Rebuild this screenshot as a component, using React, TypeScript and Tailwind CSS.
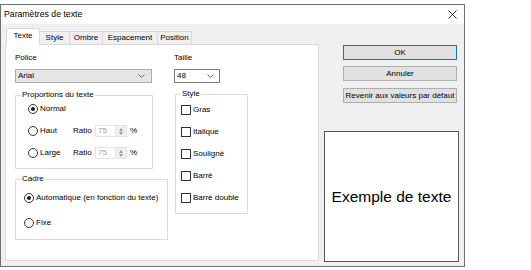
import React from 'react';

const Radio = ({ checked, label }: { checked?: boolean; label: string }) => (
  <div className="flex items-center gap-[2px] h-[12px]">
    <span className="w-[10px] h-[10px] rounded-full border border-[#333333] bg-white flex items-center justify-center">
      {checked && <span className="w-[4px] h-[4px] rounded-full bg-[#1a1a1a]" />}
    </span>
    <span className="leading-[12px]">{label}</span>
  </div>
);

const Check = ({ label }: { label: string }) => (
  <div className="flex items-center gap-[2px] h-[10px]">
    <span className="w-[10px] h-[10px] border border-[#333333] bg-white" />
    <span className="leading-[10px]">{label}</span>
  </div>
);

const Chevron = () => (
  <svg width="7" height="4" viewBox="0 0 7 4">
    <polyline points="0.5,0.5 3.5,3.5 6.5,0.5" fill="none" stroke="#555" strokeWidth="0.9" />
  </svg>
);

const SpinBox = () => (
  <div className="flex w-[32px] h-[12px] border border-[#e3e3e3] bg-white">
    <span className="flex-1 pl-[2px] leading-[10px] text-[#a0a0a0]">75</span>
    <div className="w-[11px] bg-[#f0f0f0] border-l border-[#e3e3e3] flex flex-col items-center justify-center gap-[1px]">
      <svg width="4" height="3" viewBox="0 0 4 3">
        <polygon points="2,0 4,3 0,3" fill="#9a9a9a" />
      </svg>
      <svg width="4" height="3" viewBox="0 0 4 3">
        <polygon points="0,0 4,0 2,3" fill="#9a9a9a" />
      </svg>
    </div>
  </div>
);

const Group = ({ label, className, children }: { label: string; className: string; children: React.ReactNode }) => (
  <div className={`relative border border-[#dcdcdc] ${className}`}>
    <span className="absolute left-[5px] -top-[6px] bg-white px-[1px] leading-[10px]">{label}</span>
    {children}
  </div>
);

const RatioRow = ({ label }: { label: string }) => (
  <div className="flex items-center mt-[10px] pl-[12px]">
    <div className="w-[45px]">
      <Radio label={label} />
    </div>
    <span className="w-[22px] leading-[12px]">Ratio</span>
    <SpinBox />
    <span className="ml-[3px] leading-[12px]">%</span>
  </div>
);

const tabs = [
  { name: 'Style', w: 'w-[30px]' },
  { name: 'Ombre', w: 'w-[33px]' },
  { name: 'Espacement', w: 'w-[55px]' },
  { name: 'Position', w: 'w-[34px]' },
];

const App = () => {
  return (
    <div className="w-[531px] h-[270px] bg-white pt-[4px] font-['Liberation_Sans',Arial,sans-serif] text-[8px] text-black">
      <div className="w-[465px] h-[263px] border border-[#6e6e6e] flex flex-col">
        {/* title bar */}
        <div className="h-[19px] bg-white flex items-center justify-between pl-[3px] pr-[7px]">
          <span className="text-[8.7px]">Paramètres de texte</span>
          <svg width="9" height="9" viewBox="0 0 9 9">
            <path d="M0.5 0.5 L8.5 8.5 M8.5 0.5 L0.5 8.5" stroke="#222" strokeWidth="0.9" />
          </svg>
        </div>

        <div className="flex-1 bg-[#f0f0f0] flex pl-[4px]">
          {/* tabs + panel */}
          <div className="pt-[4px] flex flex-col">
            <div className="flex items-end h-[16px] pl-[1px]">
              <div className="relative z-10 -mb-px h-[17px] w-[34px] bg-white border border-b-0 border-[#d9d9d9] flex items-center justify-center pb-[2px]">
                Texte
              </div>
              {tabs.map((t) => (
                <div
                  key={t.name}
                  className={`h-[13px] ${t.w} border-t border-r border-[#d9d9d9] flex items-center justify-center`}
                >
                  {t.name}
                </div>
              ))}
            </div>
            <div className="w-[314px] h-[217px] bg-white border border-[#d9d9d9] flex pl-[9px]">
              {/* left column */}
              <div className="w-[153px] flex flex-col">
                <span className="mt-[8px] h-[10px] leading-[10px]">Police</span>
                <div className="mt-[6px] w-[137px] h-[14px] bg-[#e5e5e5] border border-[#adadad] flex items-center justify-between pl-[2px] pr-[6px]">
                  <span>Arial</span>
                  <Chevron />
                </div>
                <Group label="Proportions du texte" className="mt-[12px] w-[138px] h-[74px]">
                  <div className="mt-[7px] pl-[12px]">
                    <Radio checked label="Normal" />
                  </div>
                  <RatioRow label="Haut" />
                  <RatioRow label="Large" />
                </Group>
                <Group label="Cadre" className="mt-[10px] w-[153px] h-[61px]">
                  <div className="mt-[12px] pl-[8px]">
                    <Radio checked label="Automatique (en fonction du texte)" />
                  </div>
                  <div className="mt-[13px] pl-[8px]">
                    <Radio label="Fixe" />
                  </div>
                </Group>
              </div>
              {/* right column */}
              <div className="ml-[6px] flex flex-col">
                <span className="mt-[8px] h-[10px] leading-[10px]">Taille</span>
                <div className="mt-[6px] w-[46px] h-[14px] bg-white border border-[#7a7a7a] flex items-center justify-between pl-[2px] pr-[5px]">
                  <span>48</span>
                  <Chevron />
                </div>
                <Group label="Style" className="mt-[11px] ml-[1px] w-[73px] h-[120px]">
                  <div className="flex flex-col gap-[12px] mt-[10px] pl-[5px]">
                    <Check label="Gras" />
                    <Check label="Italique" />
                    <Check label="Souligné" />
                    <Check label="Barré" />
                    <Check label="Barré double" />
                  </div>
                </Group>
              </div>
            </div>
          </div>

          {/* buttons + preview */}
          <div className="ml-[5px] w-[135px] flex flex-col">
            <div className="mt-[21px] ml-[19px] w-[114px] flex flex-col gap-[6px]">
              <div className="h-[15px] bg-[#e1e1e1] border border-[#0078d7] flex items-center justify-center">OK</div>
              <div className="h-[15px] bg-[#e1e1e1] border border-[#adadad] flex items-center justify-center">Annuler</div>
              <div className="mt-[1px] h-[15px] bg-[#e1e1e1] border border-[#adadad] flex items-center justify-center">
                Revenir aux valeurs par défaut
              </div>
            </div>
            <div className="mt-[28px] h-[131px] w-[135px] bg-white border border-[#555555] flex items-center justify-center">
              <span className="text-[15.5px]">Exemple de texte</span>
            </div>
          </div>
        </div>
      </div>
    </div>
  );
};

export default App;
